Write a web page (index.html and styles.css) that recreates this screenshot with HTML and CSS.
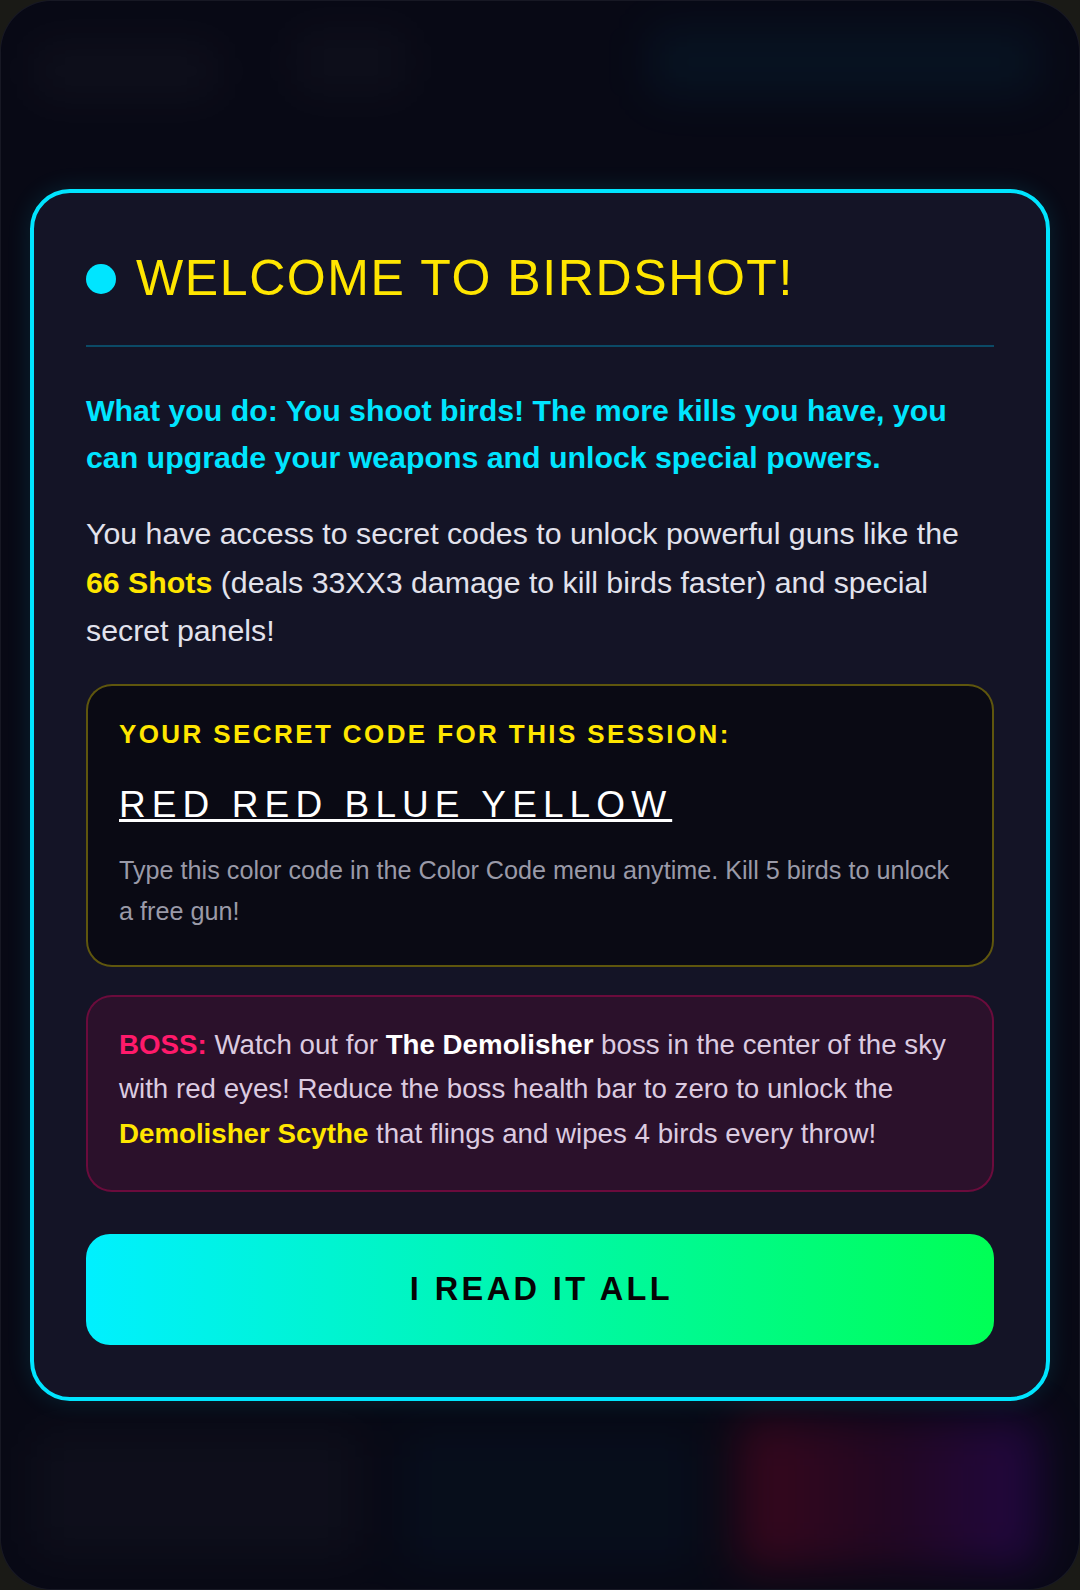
FILE: index.html
```html
<!DOCTYPE html>
<html lang="en">
<head>
  <meta charset="UTF-8">
  <meta name="viewport" content="width=device-width, initial-scale=1.0">
  <title>Birdshot</title>
  <link rel="stylesheet" href="styles.css">
</head>
<body>
  <div class="screen">
    <!-- game layer, blurred behind the welcome dialog -->
    <div class="game">
      <div class="hud hud-top">
        <div class="hud-group">
          <div class="hud-chip chip-score"></div>
          <div class="hud-chip chip-kills"></div>
        </div>
        <div class="hud-chip chip-weapon"></div>
      </div>
      <div class="sky"></div>
      <div class="hud hud-bottom">
        <div class="hud-chip chip-code"></div>
        <div class="hud-chip chip-shop"></div>
        <div class="hud-chip chip-boss"></div>
      </div>
    </div>

    <div class="overlay">
      <div class="modal">
        <div class="modal-header">
          <span class="dot"></span>
          <h1 class="modal-title">WELCOME TO BIRDSHOT!</h1>
        </div>

        <p class="intro">What you do: You shoot birds! The more kills you have, you can upgrade your weapons and unlock special powers.</p>

        <p class="info">You have access to secret codes to unlock powerful guns like the <strong class="gold">66 Shots</strong> (deals 33XX3 damage to kill birds faster) and special secret panels!</p>

        <div class="code-box">
          <div class="code-label">YOUR SECRET CODE FOR THIS SESSION:</div>
          <div class="code-value">RED RED BLUE YELLOW</div>
          <p class="code-hint">Type this color code in the Color Code menu anytime. Kill 5 birds to unlock a free gun!</p>
        </div>

        <div class="boss-box">
          <p><strong class="boss-tag">BOSS:</strong> Watch out for <strong class="boss-name">The Demolisher</strong> boss in the center of the sky with red eyes! Reduce the boss health bar to zero to unlock the <strong class="gold">Demolisher Scythe</strong> that flings and wipes 4 birds every throw!</p>
        </div>

        <button class="btn-start" id="start-button">I READ IT ALL</button>
      </div>
    </div>
  </div>
</body>
</html>
```

FILE: styles.css
```css
body {
  font-family: 'Liberation Sans', Arial, Helvetica, sans-serif;
  margin: 0;
  padding: 0;
  background-color: #1a1a16;
  color: #e2e2ec;
}
.screen {
  position: relative;
  width: 1080px;
  height: 1590px;
  border-radius: 52px;
  overflow: hidden;
  background-color: #0b0c19;
  box-sizing: border-box;
  border: 1px solid rgba(255, 255, 255, 0.05);
}

/* game HUD behind the dialog */
.game {
  display: flex;
  flex-direction: column;
  height: 100%;
  filter: blur(22px);
}
.hud {
  display: flex;
  justify-content: space-between;
}
.hud-top {
  align-items: flex-start;
  padding: 26px 40px 0 30px;
}
.hud-group {
  display: flex;
  gap: 70px;
}
.hud-chip {
  border-radius: 14px;
}
.chip-score {
  width: 190px;
  height: 60px;
  margin-top: 14px;
  background-color: rgba(255, 255, 255, 0.04);
}
.chip-kills {
  width: 120px;
  height: 70px;
  background-color: rgba(255, 255, 255, 0.035);
}
.chip-weapon {
  width: 390px;
  height: 70px;
  background-color: rgba(0, 190, 255, 0.08);
}
.sky {
  flex: 1;
}
.hud-bottom {
  align-items: flex-end;
  padding: 0 40px 20px 30px;
}
.chip-code {
  width: 330px;
  height: 130px;
  margin-bottom: 10px;
  background-color: rgba(255, 255, 255, 0.035);
}
.chip-shop {
  width: 300px;
  height: 140px;
  background-color: rgba(0, 190, 255, 0.045);
}
.chip-boss {
  width: 300px;
  height: 150px;
  background: linear-gradient(90deg, rgba(255, 0, 60, 0.28), rgba(200, 0, 120, 0.2), rgba(140, 0, 255, 0.28));
}

/* welcome dialog */
.overlay {
  position: absolute;
  inset: 0;
  display: flex;
  justify-content: center;
  align-items: center;
  background-color: rgba(4, 4, 14, 0.3);
}
.modal {
  width: 1020px;
  padding: 52px;
  box-sizing: border-box;
  background-color: #141426;
  border: 4px solid #00e5ff;
  border-radius: 40px;
  box-shadow: 0 0 24px rgba(0, 229, 255, 0.12);
}
.modal-header {
  display: flex;
  align-items: center;
  gap: 20px;
  padding-bottom: 32px;
  border-bottom: 2px solid #0b4a66;
}
.dot {
  width: 30px;
  height: 30px;
  border-radius: 50%;
  background-color: #00e5ff;
  flex-shrink: 0;
}
.modal-title {
  margin: 0;
  font-size: 50px;
  font-weight: 400;
  line-height: 1.35;
  letter-spacing: 1.6px;
  color: #ffe600;
}
.intro {
  margin: 40px 0 0;
  font-size: 30.3px;
  font-weight: 700;
  line-height: 1.58;
  color: #00e5ff;
}
.info {
  margin: 28px 0 0;
  font-size: 30.3px;
  line-height: 1.6;
  color: #e2e2ec;
}
.gold {
  color: #ffe600;
}

.code-box {
  margin-top: 28px;
  padding: 28px 31px 34px;
  background-color: #0a0a14;
  border: 2px solid rgba(255, 230, 0, 0.35);
  border-radius: 26px;
}
.code-label {
  font-size: 26px;
  font-weight: 700;
  line-height: 1.6;
  letter-spacing: 2.4px;
  color: #ffe600;
}
.code-value {
  margin-top: 20px;
  font-size: 37px;
  line-height: 1.6;
  letter-spacing: 6.1px;
  color: #ffffff;
  text-decoration: underline;
}
.code-hint {
  margin: 16px 0 0;
  font-size: 25.2px;
  line-height: 1.6;
  color: #9a9aa8;
}

.boss-box {
  margin-top: 28px;
  padding: 26px 31px 34px;
  background-color: #2b112b;
  border: 2px solid rgba(255, 0, 100, 0.3);
  border-radius: 26px;
}
.boss-box p {
  margin: 0;
  font-size: 27.7px;
  line-height: 1.6;
  color: #dccbe0;
}
.boss-tag {
  color: #ff1a6b;
}
.boss-name {
  color: #ffffff;
}

.btn-start {
  display: block;
  width: 100%;
  height: 111px;
  margin-top: 42px;
  padding: 0 0 0 3px;
  border: none;
  border-radius: 24px;
  background: linear-gradient(90deg, #00f0ff, #00ff55);
  color: #050505;
  font-family: inherit;
  font-size: 32.5px;
  font-weight: 700;
  letter-spacing: 3.4px;
  cursor: pointer;
}
```
